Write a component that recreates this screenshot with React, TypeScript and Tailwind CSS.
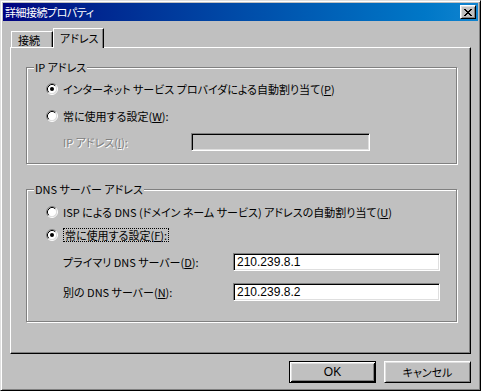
import React from "react";

function Radio({ checked }: { checked?: boolean }) {
  return (
    <svg width="12" height="12" viewBox="0 0 12 12" className="shrink-0">
      <circle cx="6" cy="6" r="4.5" fill="#fff" />
      <path d="M2.11 9.89 A5.5 5.5 0 0 1 9.89 2.11" fill="none" stroke="#808080" strokeWidth="1" />
      <path d="M9.89 2.11 A5.5 5.5 0 0 1 2.11 9.89" fill="none" stroke="#fff" strokeWidth="1" />
      <path d="M2.82 9.18 A4.5 4.5 0 0 1 9.18 2.82" fill="none" stroke="#000" strokeWidth="1" />
      <path d="M9.18 2.82 A4.5 4.5 0 0 1 2.82 9.18" fill="none" stroke="#dfdfdf" strokeWidth="1" />
      {checked && <circle cx="6" cy="6" r="2" fill="#000" />}
    </svg>
  );
}

function TextBox({ value, width, disabled }: { value?: string; width: string; disabled?: boolean }) {
  return (
    <div
      className={`${width} h-[18px] ${disabled ? "bg-[#c0c0c0]" : "bg-white"} border border-t-[#808080] border-l-[#808080] border-r-white border-b-white shadow-[inset_1px_1px_0_#000,inset_-1px_-1px_0_#dfdfdf] flex items-center pl-[3px] font-['Liberation_Sans',Arial,sans-serif] text-[12px] leading-[12px]`}
    >
      {value}
    </div>
  );
}

export default function App() {
  return (
    <div className="w-[481px] h-[391px] bg-[#c0c0c0] border border-t-[#dfdfdf] border-l-[#dfdfdf] border-r-black border-b-black shadow-[inset_1px_1px_0_#fff,inset_-1px_-1px_0_#808080] p-[2px] flex flex-col text-[11px] leading-[12px] text-black font-['Noto_Sans_CJK_JP','Noto_Sans',sans-serif] [font-feature-settings:'palt']">
      {/* Title bar */}
      <div className="h-[18px] shrink-0 flex items-center bg-linear-to-r from-[#000080] to-[#1084d0] pl-[2px] pr-[2px]">
        <span className="flex-1 text-white tracking-[-0.5px]">詳細接続プロパティ</span>
        <div className="w-[16px] h-[14px] bg-[#c0c0c0] border border-t-white border-l-white border-r-black border-b-black shadow-[inset_1px_1px_0_#dfdfdf,inset_-1px_-1px_0_#808080] flex items-center justify-center">
          <svg width="8" height="7" viewBox="0 0 8 7" shapeRendering="crispEdges">
            <path
              d="M0 0h2v1H0zM6 0h2v1H6zM1 1h2v1H1zM5 1h2v1H5zM2 2h4v1H2zM3 3h2v1H3zM2 4h4v1H2zM1 5h2v1H1zM5 5h2v1H5zM0 6h2v1H0zM6 6h2v1H6z"
              fill="#000"
            />
          </svg>
        </div>
      </div>

      <div className="flex flex-col px-[7px] pt-[7px]">
        {/* Tabs */}
        <div className="h-[19px] flex items-end pl-[1px]">
          <div className="w-[42px] h-[16px] border-t border-l border-white border-r border-r-black shadow-[inset_-1px_0_0_#808080] flex items-center pl-[6px]">
            接続
          </div>
          <div className="relative z-10 w-[51px] h-[20px] -mb-[1px] bg-[#c0c0c0] border-t border-l border-white border-r border-r-black shadow-[inset_-1px_0_0_#808080] flex items-center pl-[6px] pb-[1px]">
            アドレス
          </div>
        </div>

        {/* Panel */}
        <div className="h-[307px] bg-[#c0c0c0] border border-t-white border-l-white border-r-black border-b-black shadow-[inset_-1px_-1px_0_#808080] flex flex-col">
          {/* IP address group */}
          <div className="ml-[15px] mt-[19px] w-[431px] h-[97px] border border-[#808080] shadow-[inset_1px_1px_0_#fff,1px_1px_0_#fff] flex flex-col">
            <span className="-mt-[7px] ml-[7px] self-start px-[1px] h-[12px] bg-[#c0c0c0]">IP アドレス</span>
            <div className="mt-[8px] h-[16px] pl-[19px] flex items-center gap-[5px]">
              <Radio checked />
              <span>
                インターネット サービス プロバイダによる自動割り当て(<u className="underline-offset-[1px]">P</u>)
              </span>
            </div>
            <div className="mt-[11px] h-[16px] pl-[19px] flex items-center gap-[5px]">
              <Radio />
              <span>
                常に使用する設定(<u className="underline-offset-[1px]">W</u>):
              </span>
            </div>
            <div className="mt-[9px] h-[18px] pl-[36px] flex items-center">
              <span className="w-[128px] text-[#808080] [text-shadow:1px_1px_0_#fff]">
                IP アドレス(<u className="underline-offset-[1px]">I</u>):
              </span>
              <TextBox width="w-[179px]" disabled />
            </div>
          </div>

          {/* DNS group */}
          <div className="ml-[15px] mt-[25px] w-[431px] h-[133px] border border-[#808080] shadow-[inset_1px_1px_0_#fff,1px_1px_0_#fff] flex flex-col">
            <span className="-mt-[7px] ml-[7px] self-start px-[1px] h-[12px] bg-[#c0c0c0]">DNS サーバー アドレス</span>
            <div className="mt-[9px] h-[16px] pl-[19px] flex items-center gap-[5px]">
              <Radio />
              <span>
                ISP による DNS (ドメイン ネーム サービス) アドレスの自動割り当て(<u className="underline-offset-[1px]">U</u>)
              </span>
            </div>
            <div className="mt-[7px] h-[16px] pl-[19px] flex items-center gap-[5px]">
              <Radio checked />
              <span className="border border-dotted border-black px-[1px] h-[14px] flex items-center">
                <span>
                  常に使用する設定(<u className="underline-offset-[1px]">F</u>):
                </span>
              </span>
            </div>
            <div className="mt-[10px] h-[18px] pl-[36px] flex items-center">
              <span className="w-[170px]">
                プライマリ DNS サーバー(<u className="underline-offset-[1px]">D</u>):
              </span>
              <TextBox width="w-[207px]" value="210.239.8.1" />
            </div>
            <div className="mt-[12px] h-[18px] pl-[36px] flex items-center">
              <span className="w-[170px]">
                別の DNS サーバー(<u className="underline-offset-[1px]">N</u>):
              </span>
              <TextBox width="w-[207px]" value="210.239.8.2" />
            </div>
          </div>
        </div>

        {/* Buttons */}
        <div className="mt-[7px] flex justify-end gap-[8px]">
          <button className="w-[87px] h-[22px] bg-[#c0c0c0] border border-black shadow-[inset_1px_1px_0_#fff,inset_-1px_-1px_0_#000,inset_2px_2px_0_#dfdfdf,inset_-2px_-2px_0_#808080] flex items-center justify-center font-['Liberation_Sans',Arial,sans-serif] text-[12px]">
            OK
          </button>
          <button className="w-[87px] h-[22px] bg-[#c0c0c0] border border-t-white border-l-white border-r-black border-b-black shadow-[inset_1px_1px_0_#dfdfdf,inset_-1px_-1px_0_#808080] flex items-center justify-center">
            キャンセル
          </button>
        </div>
      </div>
    </div>
  );
}
